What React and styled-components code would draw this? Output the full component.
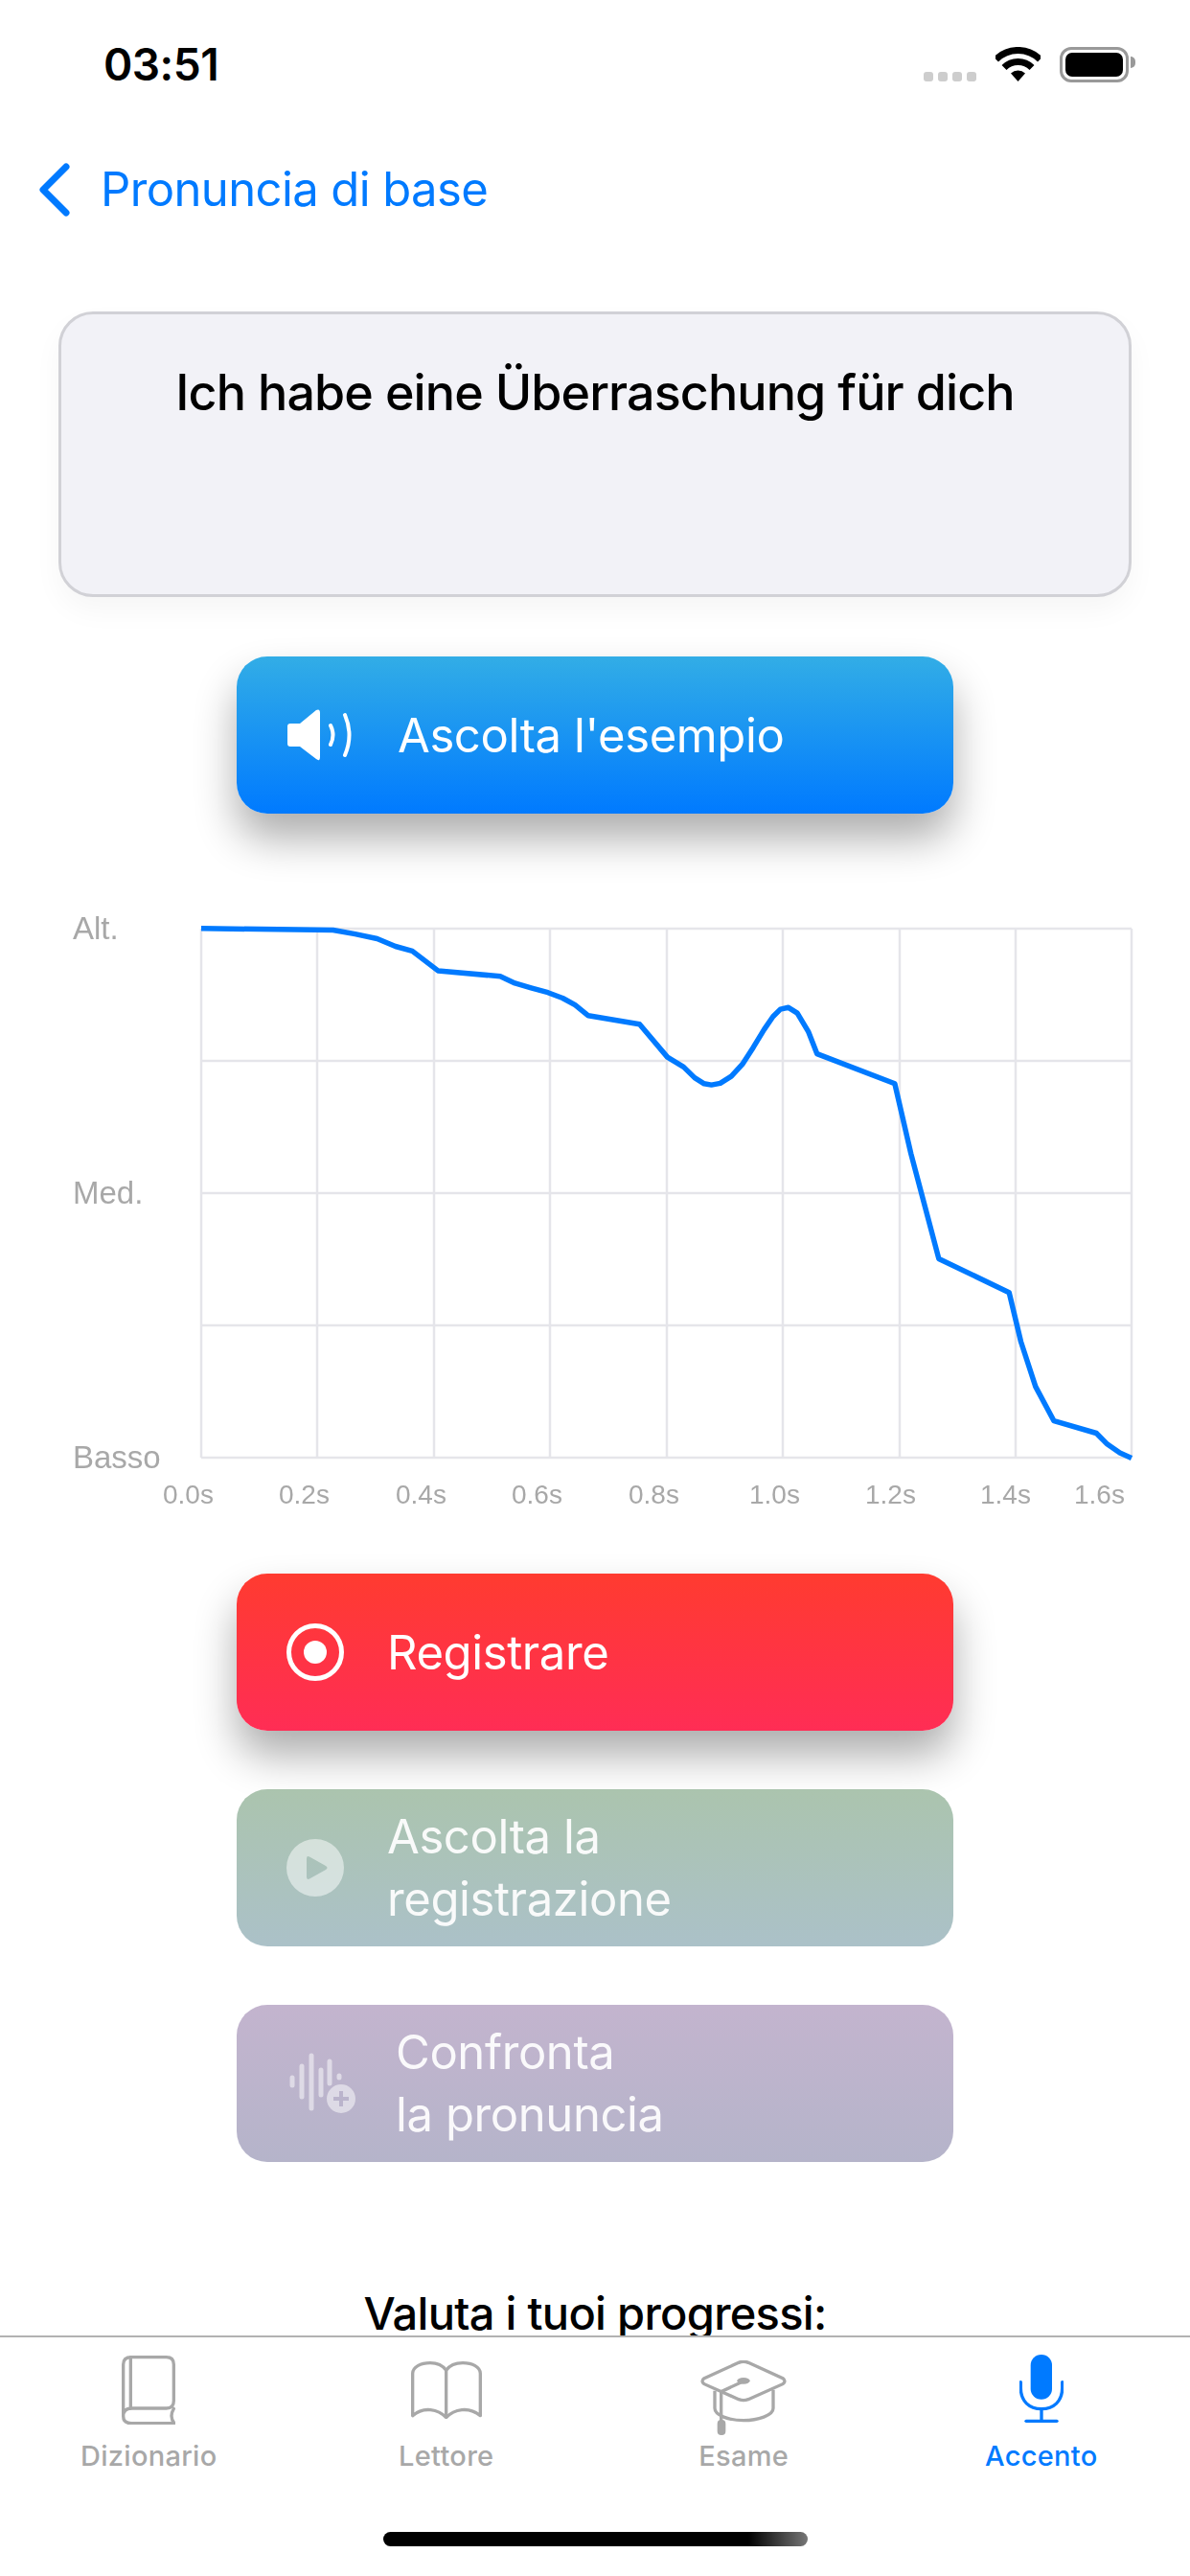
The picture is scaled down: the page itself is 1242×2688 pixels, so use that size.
import React from "react";
import styled, { createGlobalStyle } from "styled-components";

const GlobalStyle = createGlobalStyle`
  html, body {
    margin: 0;
    padding: 0;
    background: #ffffff;
  }
  * {
    box-sizing: border-box;
  }
`;

const Page = styled.div`
  display: flex;
  flex-direction: column;
  width: 1242px;
  height: 2688px;
  overflow: hidden;
  background: #ffffff;
  font-family: Inter, "Liberation Sans", sans-serif;
`;

const Content = styled.main`
  flex: 1;
  min-height: 0;
  overflow: hidden;
`;

const StatusBar = styled.div`
  display: flex;
  justify-content: space-between;
  align-items: flex-start;
  height: 132px;
  padding: 49px 64px 0 108px;
`;

const Time = styled.span`
  font-size: 46px;
  font-weight: 600;
  line-height: 36px;
  letter-spacing: -0.5px;
  color: #000000;
`;

const StatusIcons = styled.div`
  display: flex;
  align-items: flex-start;
`;

const SignalDots = styled.div`
  display: flex;
  gap: 5px;
  margin: 26px 20px 0 0;
`;

const SignalDot = styled.span`
  width: 10px;
  height: 10px;
  border-radius: 3px;
  background: #cdcdcd;
`;

const Battery = styled.div`
  position: relative;
  width: 72px;
  height: 37px;
  margin-left: 20px;
  padding: 3px;
  border: 3px solid #999999;
  border-radius: 12px;

  &::before {
    content: "";
    display: block;
    height: 100%;
    border-radius: 7px;
    background: #000000;
  }

  &::after {
    content: "";
    position: absolute;
    top: 7px;
    right: -10px;
    width: 5px;
    height: 12px;
    border-radius: 0 6px 6px 0;
    background: #999999;
  }
`;

const NavRow = styled.nav`
  display: flex;
  align-items: center;
  height: 132px;
  padding-left: 40px;
`;

const BackLabel = styled.span`
  margin-left: 32px;
  font-size: 49px;
  line-height: 60px;
  letter-spacing: -0.6px;
  color: #007aff;
`;

const PhraseCard = styled.section`
  width: 1120px;
  height: 298px;
  margin: 61px 0 0 61px;
  padding-top: 50px;
  border: 3px solid #d1d1d6;
  border-radius: 36px;
  background: #f2f2f7;
  box-shadow: 0 14px 30px rgba(0, 0, 0, 0.04);
`;

const Phrase = styled.p`
  margin: 0;
  font-size: 52px;
  line-height: 64px;
  font-weight: 500;
  letter-spacing: -0.9px;
  text-align: center;
  color: #000000;
`;

const ActionButton = styled.button`
  display: flex;
  align-items: center;
  width: 748px;
  height: 164px;
  margin: ${(props) => props.$top}px auto 0;
  padding: 0 0 0 52px;
  border: none;
  border-radius: 32px;
  font-family: inherit;
  text-align: left;
  color: #ffffff;
  background: linear-gradient(${(props) => props.$from}, ${(props) => props.$to});
  box-shadow: ${(props) =>
    props.$raised ? "0 26px 44px rgba(0, 0, 0, 0.32)" : "none"};
`;

const ButtonLabel = styled.span`
  margin-left: ${(props) => props.$gap}px;
  font-size: 49px;
  line-height: 65px;
  letter-spacing: -0.4px;
  color: ${(props) => (props.$dim ? "rgba(255, 255, 255, 0.92)" : "#ffffff")};
`;

const ChartWrap = styled.div`
  height: 650px;
  margin-top: 81px;
`;

const Chart = styled.svg`
  display: block;
  filter: blur(0.5px);
`;

const ChartText = styled.text`
  font-family: "Liberation Sans", Arial, sans-serif;
  font-size: ${(props) => props.$size}px;
  fill: #a8a8a8;
`;

const ProgressTitle = styled.h2`
  margin: 128px 0 0;
  font-size: 47px;
  line-height: 60px;
  font-weight: 500;
  letter-spacing: -0.7px;
  text-align: center;
  color: #000000;
`;

const TabBar = styled.footer`
  display: flex;
  flex-direction: column;
  align-items: center;
  height: 251px;
  border-top: 2px solid #b2b2b2;
  background: #ffffff;
`;

const TabRow = styled.div`
  display: grid;
  grid-template-columns: repeat(4, 1fr);
  width: 100%;
  padding-top: 18px;
`;

const Tab = styled.div`
  display: flex;
  flex-direction: column;
  align-items: center;
  color: ${(props) => (props.$active ? "#007aff" : "#a8a8a8")};
`;

const TabIcon = styled.div`
  display: flex;
  justify-content: center;
  height: 88px;
  padding-top: ${(props) => props.$top}px;
`;

const TabLabel = styled.span`
  font-size: 29px;
  line-height: 36px;
  font-weight: 500;
  letter-spacing: 0.3px;
`;

const HomeIndicator = styled.div`
  width: 443px;
  height: 15px;
  margin-top: 61px;
  border-radius: 8px;
  background: linear-gradient(90deg, #000000 0%, #000000 86%, #777777 100%);
`;

const gridColumns = [210, 331, 453, 574, 696, 817, 939, 1060, 1181];
const gridRows = [969, 1107, 1245, 1383, 1521];

const yLabels = [
  { text: "Alt.", y: 980 },
  { text: "Med.", y: 1256 },
  { text: "Basso", y: 1532 },
];

const xLabels = [
  { text: "0.0s", x: 170 },
  { text: "0.2s", x: 291 },
  { text: "0.4s", x: 413 },
  { text: "0.6s", x: 534 },
  { text: "0.8s", x: 656 },
  { text: "1.0s", x: 782 },
  { text: "1.2s", x: 903 },
  { text: "1.4s", x: 1023 },
  { text: "1.6s", x: 1121 },
];

const curve =
  "210,968.8 347.6,970.5 370.6,974.6 393.6,979.5 412.7,987.5 430.3,992.4 457.1,1012.9 522.1,1018.8 " +
  "537.4,1025.9 554.3,1030.8 571.9,1035.7 587.2,1041.5 600.2,1048.7 614,1059.8 667.5,1068.8 696.6,1103.1 " +
  "713.5,1113.4 725,1124.6 734.9,1130.8 742.5,1132.1 751.7,1130.4 763.2,1123.2 774.7,1110.7 786.2,1092.9 " +
  "797.6,1074.1 806.8,1060.7 814.5,1053.1 822.9,1051.3 832.1,1057.1 843.6,1076.3 852.7,1099.6 933.9,1130.8 " +
  "950.7,1203.6 979.8,1313.4 1053.2,1348.7 1065.5,1400 1080.8,1446.9 1100,1482.7 1144.3,1495.5 1155.8,1507.1 " +
  "1168.8,1516 1181,1521.4";

const WifiIcon = () => (
  <svg width="47" height="36" viewBox="0 0 47 36" fill="none" stroke="#000">
    <path d="M0.5 13 A32.5 32.5 0 0 1 46.5 13" strokeWidth="7" />
    <path d="M9 21.5 A20.5 20.5 0 0 1 38 21.5" strokeWidth="7" />
    <path d="M23.5 36 L16 27.5 A11 11 0 0 1 31 27.5 Z" fill="#000" stroke="none" />
  </svg>
);

const BackChevron = () => (
  <svg width="33" height="56" viewBox="0 0 33 56" fill="none">
    <path
      d="M29 4 L5 28 L29 52"
      stroke="#007aff"
      strokeWidth="7"
      strokeLinecap="round"
      strokeLinejoin="round"
    />
  </svg>
);

const SpeakerIcon = () => (
  <svg width="72" height="54" viewBox="0 0 72 54" fill="none">
    <path
      d="M4 15 H14 L31 1 Q35 -1 35 4 V50 Q35 55 31 52 L14 39 H4 Q1 39 1 36 V18 Q1 15 4 15 Z"
      fill="#fff"
    />
    <path d="M46 17 Q51 27 46 37" stroke="#fff" strokeWidth="4" strokeLinecap="round" />
    <path d="M61 6 Q70 27 61 48" stroke="#fff" strokeWidth="4" strokeLinecap="round" />
  </svg>
);

const RecordIcon = () => (
  <svg width="60" height="60" viewBox="0 0 60 60" fill="none">
    <circle cx="30" cy="30" r="27.5" stroke="#fff" strokeWidth="5" />
    <circle cx="30" cy="30" r="12" fill="#fff" />
  </svg>
);

const PlayIcon = () => (
  <svg width="60" height="60" viewBox="0 0 60 60">
    <path
      fillRule="evenodd"
      fill="#fff"
      fillOpacity="0.5"
      d="M30 0 A30 30 0 1 1 30 60 A30 30 0 1 1 30 0 Z M24 18.5 Q21 17 21 20.5 V39.5 Q21 43 24 41.5 L41 32 Q44 30 41 28 Z"
    />
  </svg>
);

const CompareIcon = () => (
  <svg width="72" height="64" viewBox="0 0 72 64" fill="none">
    <g stroke="#fff" strokeOpacity="0.5" strokeWidth="5" strokeLinecap="round">
      <path d="M6 26 V34" />
      <path d="M16 14 V46" />
      <path d="M26 3 V58" />
      <path d="M36 18 V44" />
      <path d="M45 9 V32" />
      <path d="M55 24 V26" />
    </g>
    <path
      fillRule="evenodd"
      fill="#fff"
      fillOpacity="0.5"
      d="M57 33 A15 15 0 1 1 57 63 A15 15 0 1 1 57 33 Z M55 40 V46 H49 V50 H55 V56 H59 V50 H65 V46 H59 V40 Z"
    />
  </svg>
);

const DictionaryIcon = () => (
  <svg width="56" height="72" viewBox="0 0 168 216" fill="none" stroke="currentColor" strokeWidth="10" strokeLinecap="round">
    <path d="M5 190 V28 Q5 5 30 5 H140 Q163 5 163 28 V142 Q163 165 140 165 H30 Q5 165 5 190 Q5 212 30 212 H165 Q148 192 163 166" />
    <path d="M28 5 V165" />
  </svg>
);

const ReaderIcon = () => (
  <svg width="74" height="60" viewBox="0 0 222 180" fill="none" stroke="currentColor" strokeWidth="10" strokeLinejoin="round">
    <path d="M5 170 V38 C5 18 30 5 60 5 C82 5 100 14 110 28 C120 14 138 5 162 5 C192 5 217 18 217 38 V170 C180 140 135 150 110 176 C85 150 40 140 5 170 Z" />
    <path d="M110 28 V176" />
  </svg>
);

const ExamIcon = () => (
  <svg width="90" height="78" viewBox="0 0 270 234" fill="none" stroke="currentColor" strokeWidth="10">
    <path d="M12 56 L120 7 Q135 1 150 7 L258 56 Q270 65 258 74 L150 122 Q135 128 120 122 L12 74 Q0 65 12 56 Z" />
    <path d="M45 95 V150 C45 172 90 188 135 188 C180 188 228 172 228 150 V92" />
    <path d="M135 65 L65 98 V190" />
    <ellipse cx="135" cy="64" rx="20" ry="10" fill="currentColor" stroke="none" />
    <rect x="53" y="186" width="26" height="48" rx="12" fill="currentColor" stroke="none" />
  </svg>
);

const AccentIcon = () => (
  <svg width="46" height="71" viewBox="0 0 138 213" fill="none">
    <rect x="35" y="0" width="67" height="140" rx="33" fill="currentColor" />
    <g stroke="currentColor" strokeWidth="10" strokeLinecap="round">
      <path d="M4 86 V105 C4 145 30 170 69 170 C108 170 134 145 134 105 V86" />
      <path d="M69 170 V208" />
      <path d="M21 208 H117" />
    </g>
  </svg>
);

const tabs = [
  { label: "Dizionario", icon: <DictionaryIcon />, top: 1 },
  { label: "Lettore", icon: <ReaderIcon />, top: 7 },
  { label: "Esame", icon: <ExamIcon />, top: 6 },
  { label: "Accento", icon: <AccentIcon />, top: 0, active: true },
];

export default function App() {
  return (
    <Page>
      <GlobalStyle />
      <Content>
        <StatusBar>
          <Time>03:51</Time>
          <StatusIcons>
            <SignalDots>
              <SignalDot />
              <SignalDot />
              <SignalDot />
              <SignalDot />
            </SignalDots>
            <WifiIcon />
            <Battery />
          </StatusIcons>
        </StatusBar>

        <NavRow>
          <BackChevron />
          <BackLabel>Pronuncia di base</BackLabel>
        </NavRow>

        <PhraseCard>
          <Phrase>Ich habe eine Überraschung für dich</Phrase>
        </PhraseCard>

        <ActionButton $top={62} $from="#32ade6" $to="#007aff" $raised>
          <SpeakerIcon />
          <ButtonLabel $gap={44}>Ascolta l'esempio</ButtonLabel>
        </ActionButton>

        <ChartWrap>
          <Chart width="1242" height="650" viewBox="0 930 1242 650">
            <g stroke="#e5e5ea" strokeWidth="2.5">
              {gridColumns.map((x) => (
                <line key={x} x1={x} y1="969" x2={x} y2="1521" />
              ))}
              {gridRows.map((y) => (
                <line key={y} x1="210" y1={y} x2="1181" y2={y} />
              ))}
            </g>
            {yLabels.map((label) => (
              <ChartText key={label.text} $size={33} x="76" y={label.y}>
                {label.text}
              </ChartText>
            ))}
            {xLabels.map((label) => (
              <ChartText key={label.text} $size={28} x={label.x} y="1569">
                {label.text}
              </ChartText>
            ))}
            <polyline
              points={curve}
              fill="none"
              stroke="#007aff"
              strokeWidth="5.5"
              strokeLinejoin="round"
            />
          </Chart>
        </ChartWrap>

        <ActionButton $top={62} $from="#ff3b30" $to="#ff2d55" $raised>
          <RecordIcon />
          <ButtonLabel $gap={45}>Registrare</ButtonLabel>
        </ActionButton>

        <ActionButton $top={61} $from="#abc4ae" $to="#abc1c8">
          <PlayIcon />
          <ButtonLabel $gap={45} $dim>
            Ascolta la
            <br />
            registrazione
          </ButtonLabel>
        </ActionButton>

        <ActionButton $top={61} $from="#c3b4ce" $to="#b5b4ca">
          <CompareIcon />
          <ButtonLabel $gap={42} $dim>
            Confronta
            <br />
            la pronuncia
          </ButtonLabel>
        </ActionButton>

        <ProgressTitle>Valuta i tuoi progressi:</ProgressTitle>
      </Content>

      <TabBar>
        <TabRow>
          {tabs.map((tab) => (
            <Tab key={tab.label} $active={tab.active}>
              <TabIcon $top={tab.top}>{tab.icon}</TabIcon>
              <TabLabel>{tab.label}</TabLabel>
            </Tab>
          ))}
        </TabRow>
        <HomeIndicator />
      </TabBar>
    </Page>
  );
}
